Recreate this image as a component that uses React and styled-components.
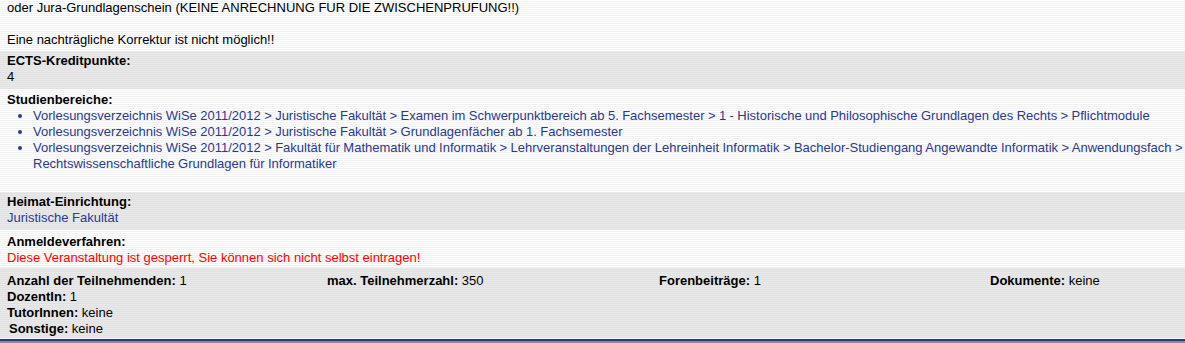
import React from 'react'
import styled, { createGlobalStyle } from 'styled-components'

const GlobalStyle = createGlobalStyle`
  html, body {
    margin: 0;
    padding: 0;
    background: #fff;
  }
  body {
    font-family: "Liberation Sans", Arial, sans-serif;
    font-size: 13px;
    line-height: 16px;
    color: #000;
  }
`

const whiteStripes = `repeating-linear-gradient(to bottom, #ffffff 0px, #ffffff 1px, #f1f1f1 1px, #f1f1f1 2px)`
const grayStripes = `repeating-linear-gradient(to bottom, #e9e9e9 0px, #e9e9e9 1px, #e1e1e1 1px, #e1e1e1 2px)`

const Page = styled.div`
  width: 1185px;
  height: 343px;
  overflow: hidden;
  display: flex;
  flex-direction: column;
  background: ${whiteStripes};
`

const Intro = styled.div`
  padding: 0 7px 3px;
`

const Block = styled.div`
  padding: ${p => p.$pad || '2px 7px 4px'};
  background: ${p => (p.$gray ? grayStripes : whiteStripes)};
`

const Label = styled.div`
  font-weight: bold;
`

const Value = styled.div`
  color: ${p => p.$color || '#000'};
`

const Areas = styled.ul`
  margin: 0 -7px 20px 0;
  padding: 0 0 0 26px;
  list-style: disc;
  word-spacing: -0.2px;

  li {
    color: #2b3a8a;
  }
`

const AreaLink = styled.a`
  color: #2b3a8a;
  text-decoration: none;
`

const StatsRow = styled.div`
  display: grid;
  grid-template-columns: 320px 332px 331px 1fr;
`

const Stat = styled.div`
  padding-left: ${p => p.$indent || 0}px;

  b {
    font-weight: bold;
  }
`

const Footer = styled.div`
  flex: 1;
  border-top: 2px solid #2a3d63;
  background: #7b8db4;
  margin-top: 1px;
`

const areas = [
  'Vorlesungsverzeichnis WiSe 2011/2012 > Juristische Fakultät > Examen im Schwerpunktbereich ab 5. Fachsemester > 1 - Historische und Philosophische Grundlagen des Rechts > Pflichtmodule',
  'Vorlesungsverzeichnis WiSe 2011/2012 > Juristische Fakultät > Grundlagenfächer ab 1. Fachsemester',
  'Vorlesungsverzeichnis WiSe 2011/2012 > Fakultät für Mathematik und Informatik > Lehrveranstaltungen der Lehreinheit Informatik > Bachelor-Studiengang Angewandte Informatik > Anwendungsfach > Rechtswissenschaftliche Grundlagen für Informatiker',
]

const App = () => {
  return (
    <Page>
      <GlobalStyle />
      <Intro>
        oder Jura-Grundlagenschein (KEINE ANRECHNUNG FUR DIE ZWISCHENPRUFUNG!!)
        <br />
        <br />
        Eine nachträgliche Korrektur ist nicht möglich!!
      </Intro>

      <Block $gray>
        <Label>ECTS-Kreditpunkte:</Label>
        <Value>4</Value>
      </Block>

      <Block $pad="3px 7px 0">
        <Label>Studienbereiche:</Label>
        <Areas>
          {areas.map(a => (
            <li key={a}>
              <AreaLink href="#">{a}</AreaLink>
            </li>
          ))}
        </Areas>
      </Block>

      <Block $gray>
        <Label>Heimat-Einrichtung:</Label>
        <Value $color="#2b3a8a">Juristische Fakultät</Value>
      </Block>

      <Block $pad="4px 7px 2px">
        <Label>Anmeldeverfahren:</Label>
        <Value $color="#ff0000">Diese Veranstaltung ist gesperrt, Sie können sich nicht selbst eintragen!</Value>
      </Block>

      <Block $gray $pad="5px 7px 1px">
        <StatsRow>
          <Stat><b>Anzahl der Teilnehmenden:</b> 1</Stat>
          <Stat><b>max. Teilnehmerzahl:</b> 350</Stat>
          <Stat><b>Forenbeiträge:</b> 1</Stat>
          <Stat><b>Dokumente:</b> keine</Stat>
        </StatsRow>
        <Stat><b>DozentIn:</b> 1</Stat>
        <Stat><b>TutorInnen:</b> keine</Stat>
        <Stat $indent={2}><b>Sonstige:</b> keine</Stat>
      </Block>

      <Footer />
    </Page>
  )
}

export default App
